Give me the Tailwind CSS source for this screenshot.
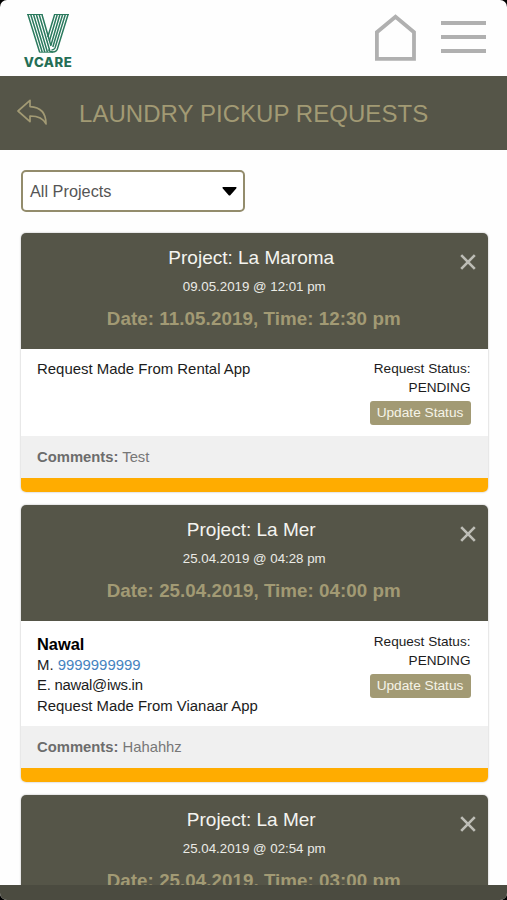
<!DOCTYPE html>
<html lang="en">
<head>
<meta charset="utf-8">
<title>Laundry Pickup Requests</title>
<script src="https://cdn.jsdelivr.net/npm/@tailwindcss/browser@4"></script>
</head>
<body class="bg-black overflow-hidden">
<svg class="hidden">
  <symbol id="close" viewBox="0 0 16 16"><path d="M1.2 1.2 14.8 14.8M14.8 1.2 1.2 14.8" fill="none" stroke="#bdbdb6" stroke-width="2.6"/></symbol>
</svg>
<div class="relative flex flex-col w-[507px] h-[900px] overflow-hidden rounded-[7px] bg-[#fefefe] font-['Liberation_Sans',Arial,sans-serif] text-[#1c1c1c]">
  <header class="flex h-[76px] shrink-0 justify-between pl-6 pr-[21px]">
    <div class="flex flex-col items-center w-12 pt-[14px]">
      <svg class="w-[42px] h-[39px] shrink-0" viewBox="0 0 42 39" fill="none" stroke="#2b7a5e" stroke-width="1.5">
        <path d="M.8 0 12.6 38M3.6 0 15.2 38M6.4 0 17.8 38M9.2 0 20.4 38M12 0 22.6 36M14.8 0 24 32"/>
        <path d="M41.2 0 30.2 35.5Q29 38 26 38Q22.5 38 21.5 35.5M38.5 0 28 34Q27 36 24.5 36M35.8 0 25.8 33M33.1 0 24 31M30.4 0 22.4 27M27.8 0 20.8 23"/>
        <path d="M0 .5H15.5M27.2 .5H42M12.2 38.2H26" stroke-width="1"/>
      </svg>
      <div class="mt-px text-[13.2px] leading-[17px] font-extrabold tracking-[0.5px] text-[#246e55] font-['Inter','Liberation_Sans',sans-serif]">VCARE</div>
    </div>
    <div class="flex gap-[25px] pt-[14px]">
      <svg class="w-[41px] h-[47px]" viewBox="0 0 41 47" fill="none" stroke="#b0b0b0" stroke-width="3.8"><path d="M1.9 44.8V18.2L20.5 2.8 39 18.2V44.8Z"/></svg>
      <div class="flex flex-col gap-[10px] pt-[7px]">
        <div class="w-[45px] h-[4px] bg-[#b0b0b0]"></div>
        <div class="w-[45px] h-[4px] bg-[#b0b0b0]"></div>
        <div class="w-[45px] h-[4px] bg-[#b0b0b0]"></div>
      </div>
    </div>
  </header>
  <div class="flex h-[74px] shrink-0 items-center bg-[#555548] pl-[17px]">
    <svg class="w-[30px] h-[26px] mb-[3px]" viewBox="0 0 30 26" fill="none" stroke="#a29a74" stroke-width="1.7" stroke-linejoin="round"><path d="M1 12 13 1.3V7.6C22.5 8 29 13 29 25C26 18.7 21 16.9 13 17V22.6Z"/></svg>
    <h1 class="mt-[2px] ml-8 text-[24px] leading-[28px] whitespace-nowrap tracking-[0.05px] text-[#a29a74]">LAUNDRY PICKUP REQUESTS</h1>
  </div>
  <main class="flex flex-col px-[21px] pt-5">
    <div class="flex w-[224px] h-[42px] items-center justify-between rounded-[5px] border-[2.5px] border-[#938c6c] bg-white pl-[7px] pr-[6px] text-[16.3px] text-[#555]">
      <span class="mt-px">All Projects</span>
      <svg class="w-[15px] h-[9px]" viewBox="0 0 15 9"><path d="M.8 0H14.2Q15 .6 14.2 1.5L8.5 8Q7.5 9 6.5 8L.8 1.5Q0 .6 .8 0Z" fill="#000"/></svg>
    </div>

    <section class="relative mt-[21px] w-[466.5px] overflow-hidden rounded-[5px] bg-white shadow-[0_0_2px_#0005]">
      <div class="flex flex-col items-center h-[116px] bg-[#555548]">
        <h2 class="mt-[13px] ml-[-6px] text-[19px] leading-[24px] text-[#f4f4f0]">Project: La Maroma</h2>
        <p class="mt-[8px] text-[13.3px] leading-[17px] text-[#ebebe6]">09.05.2019 @ 12:01 pm</p>
        <p class="mt-[12px] mr-px text-[18.8px] leading-[23px] font-bold tracking-[0.06px] text-[#a29a74]">Date: 11.05.2019, Time: 12:30 pm</p>
      </div>
      <svg class="absolute right-[12px] top-[20.5px] w-4 h-4"><use href="#close"/></svg>
      <div class="flex h-[87px] justify-between pl-4 pr-[17px] pt-[10px]">
        <div class="text-[14.95px] leading-[20.5px]">Request Made From Rental App</div>
        <div class="flex flex-col items-end text-[13.6px] leading-[19px]">
          <span>Request Status:</span><span>PENDING</span>
          <button class="mt-[4px] w-[101px] h-[24px] rounded-[3px] bg-[#a29a74] text-[13.7px] leading-[24px] text-[#f6f4e8]">Update Status</button>
        </div>
      </div>
      <div class="h-[42px] bg-[#f0f0f0] px-4 text-[14.8px] leading-[42px] text-[#777]"><b class="text-[#6c6c6c]">Comments:</b> Test</div>
      <div class="h-[13.5px] bg-[#ffac00]"></div>
    </section>

    <section class="relative mt-[13.9px] w-[466.5px] overflow-hidden rounded-[5px] bg-white shadow-[0_0_2px_#0005]">
      <div class="flex flex-col items-center h-[116px] bg-[#555548]">
        <h2 class="mt-[13px] ml-[-6px] text-[19px] leading-[24px] text-[#f4f4f0]">Project: La Mer</h2>
        <p class="mt-[8px] text-[13.3px] leading-[17px] text-[#ebebe6]">25.04.2019 @ 04:28 pm</p>
        <p class="mt-[12px] mr-px text-[18.8px] leading-[24px] font-bold tracking-[0.03px] text-[#a29a74]">Date: 25.04.2019, Time: 04:00 pm</p>
      </div>
      <svg class="absolute right-[12px] top-[20.5px] w-4 h-4"><use href="#close"/></svg>
      <div class="flex h-[105px] justify-between pl-4 pr-[17px] pt-[10px]">
        <div class="mt-[3px] text-[14.9px] leading-[20.5px]">
          <div class="text-[16.4px] font-bold text-black">Nawal</div>
          <div>M. <span class="text-[#4583c0]">9999999999</span></div>
          <div class="tracking-[-0.25px]">E. nawal@iws.in</div>
          <div>Request Made From Vianaar App</div>
        </div>
        <div class="flex flex-col items-end pt-[0.6px] text-[13.6px] leading-[19px]">
          <span>Request Status:</span><span>PENDING</span>
          <button class="mt-[4px] w-[101px] h-[24px] rounded-[3px] bg-[#a29a74] text-[13.7px] leading-[24px] text-[#f6f4e8]">Update Status</button>
        </div>
      </div>
      <div class="h-[42px] bg-[#f0f0f0] px-4 text-[14.8px] leading-[42px] text-[#777]"><b class="text-[#6c6c6c]">Comments:</b> Hahahhz</div>
      <div class="h-[13.5px] bg-[#ffac00]"></div>
    </section>

    <section class="relative mt-[13.4px] w-[466.5px] overflow-hidden rounded-[5px] bg-white shadow-[0_0_2px_#0005]">
      <div class="flex flex-col items-center h-[116px] bg-[#555548]">
        <h2 class="mt-[13px] ml-[-6px] text-[19px] leading-[24px] text-[#f4f4f0]">Project: La Mer</h2>
        <p class="mt-[8px] text-[13.3px] leading-[17px] text-[#ebebe6]">25.04.2019 @ 02:54 pm</p>
        <p class="mt-[12px] mr-px text-[18.8px] leading-[24px] font-bold tracking-[0.03px] text-[#a29a74]">Date: 25.04.2019, Time: 03:00 pm</p>
      </div>
      <svg class="absolute right-[12px] top-[20.5px] w-4 h-4"><use href="#close"/></svg>
    </section>
  </main>
  <div class="absolute inset-x-0 bottom-0 h-[15px] bg-[#4b4b40]"></div>
</div>
</body>
</html>
